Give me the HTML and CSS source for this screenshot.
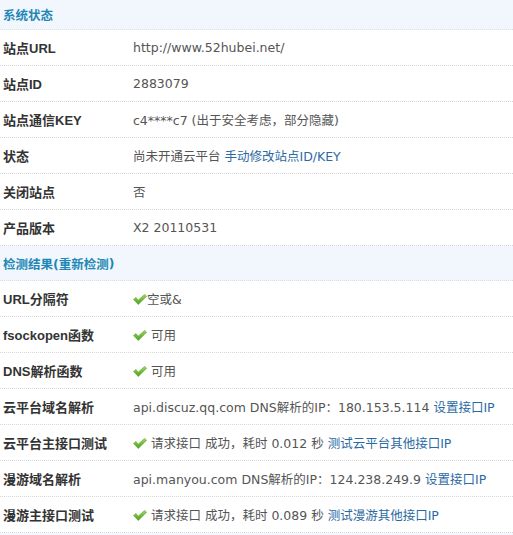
FILE: index.html
```html
<!DOCTYPE html>
<html>
<head>
<meta charset="utf-8">
<link rel="stylesheet" href="styles.css">
</head>
<body>
<div class="panel">
  <div class="hdr hdr-first">系统状态</div>
  <div class="row"><div class="lbl">站点URL</div><div class="val">http://www.52hubei.net/</div></div>
  <div class="row"><div class="lbl">站点ID</div><div class="val">2883079</div></div>
  <div class="row"><div class="lbl">站点通信KEY</div><div class="val">c4****c7 (出于安全考虑，部分隐藏)</div></div>
  <div class="row"><div class="lbl">状态</div><div class="val">尚未开通云平台 <a class="lnk" href="#">手动修改站点ID/KEY</a></div></div>
  <div class="row"><div class="lbl">关闭站点</div><div class="val">否</div></div>
  <div class="row"><div class="lbl">产品版本</div><div class="val">X2 20110531</div></div>
  <div class="hdr hdr-second">检测结果(<span>重新检测</span>)</div>
  <div class="row"><div class="lbl">URL分隔符</div><div class="val"><svg class="ok" viewBox="0 0 14 11"><defs><linearGradient id="g" x1="0" y1="0" x2="0" y2="1"><stop offset="0" stop-color="#9ad85a"/><stop offset="1" stop-color="#4c9f22"/></linearGradient></defs><path d="M0.5 5.6 L3 3.6 L5.2 6.2 L11.6 0.4 L13.6 2.2 L5.3 10.6 Z" fill="url(#g)" stroke="#5aa52c" stroke-width="0.6" stroke-linejoin="round"/></svg>空或&amp;</div></div>
  <div class="row"><div class="lbl">fsockopen函数</div><div class="val"><svg class="ok" viewBox="0 0 14 11"><path d="M0.5 5.6 L3 3.6 L5.2 6.2 L11.6 0.4 L13.6 2.2 L5.3 10.6 Z" fill="url(#g)" stroke="#5aa52c" stroke-width="0.6" stroke-linejoin="round"/></svg> 可用</div></div>
  <div class="row"><div class="lbl">DNS解析函数</div><div class="val"><svg class="ok" viewBox="0 0 14 11"><path d="M0.5 5.6 L3 3.6 L5.2 6.2 L11.6 0.4 L13.6 2.2 L5.3 10.6 Z" fill="url(#g)" stroke="#5aa52c" stroke-width="0.6" stroke-linejoin="round"/></svg> 可用</div></div>
  <div class="row"><div class="lbl">云平台域名解析</div><div class="val">api.discuz.qq.com DNS解析的IP：180.153.5.114 <a class="lnk" href="#">设置接口IP</a></div></div>
  <div class="row"><div class="lbl">云平台主接口测试</div><div class="val"><svg class="ok" viewBox="0 0 14 11"><path d="M0.5 5.6 L3 3.6 L5.2 6.2 L11.6 0.4 L13.6 2.2 L5.3 10.6 Z" fill="url(#g)" stroke="#5aa52c" stroke-width="0.6" stroke-linejoin="round"/></svg> 请求接口 成功，耗时 0.012 秒 <a class="lnk" href="#">测试云平台其他接口IP</a></div></div>
  <div class="row"><div class="lbl">漫游域名解析</div><div class="val">api.manyou.com DNS解析的IP：124.238.249.9 <a class="lnk" href="#">设置接口IP</a></div></div>
  <div class="row"><div class="lbl">漫游主接口测试</div><div class="val"><svg class="ok" viewBox="0 0 14 11"><path d="M0.5 5.6 L3 3.6 L5.2 6.2 L11.6 0.4 L13.6 2.2 L5.3 10.6 Z" fill="url(#g)" stroke="#5aa52c" stroke-width="0.6" stroke-linejoin="round"/></svg> 请求接口 成功，耗时 0.089 秒 <a class="lnk" href="#">测试漫游其他接口IP</a></div></div>
  <div class="hdr hdr-tail"></div>
</div>
</body>
</html>
```
FILE: styles.css
```css
html, body {
  margin: 0;
  padding: 0;
  background: #fff;
}
.panel {
  width: 513px;
  font-family: "DejaVu Sans", "Noto Sans CJK SC", sans-serif;
  font-size: 12.5px;
  color: #555;
}
.hdr {
  display: flex;
  align-items: center;
  padding-left: 3px;
  background: #f1f7fd;
  color: #1f87b6;
  font-weight: bold;
  font-size: 12.5px;
  border-bottom: 1px dotted #d6dde3;
}
.hdr-first {
  height: 30px;
  padding-bottom: 1px;
  box-sizing: border-box;
}
.hdr-second {
  height: 34px;
}
.hdr-tail {
  height: 10px;
  border-bottom: none;
}
.row {
  display: grid;
  grid-template-columns: 133px 1fr;
  align-items: center;
  height: 35px;
  border-bottom: 1px dotted #d8d8d8;
}
.lbl {
  padding-left: 3px;
  font-family: "Liberation Sans", "Noto Sans CJK SC", sans-serif;
  font-size: 13px;
  font-weight: bold;
  color: #333;
}
.val {
  white-space: nowrap;
}
.lnk {
  color: #2a6aa3;
  text-decoration: none;
}
.ok {
  width: 14px;
  height: 11px;
  vertical-align: -1px;
}
```
